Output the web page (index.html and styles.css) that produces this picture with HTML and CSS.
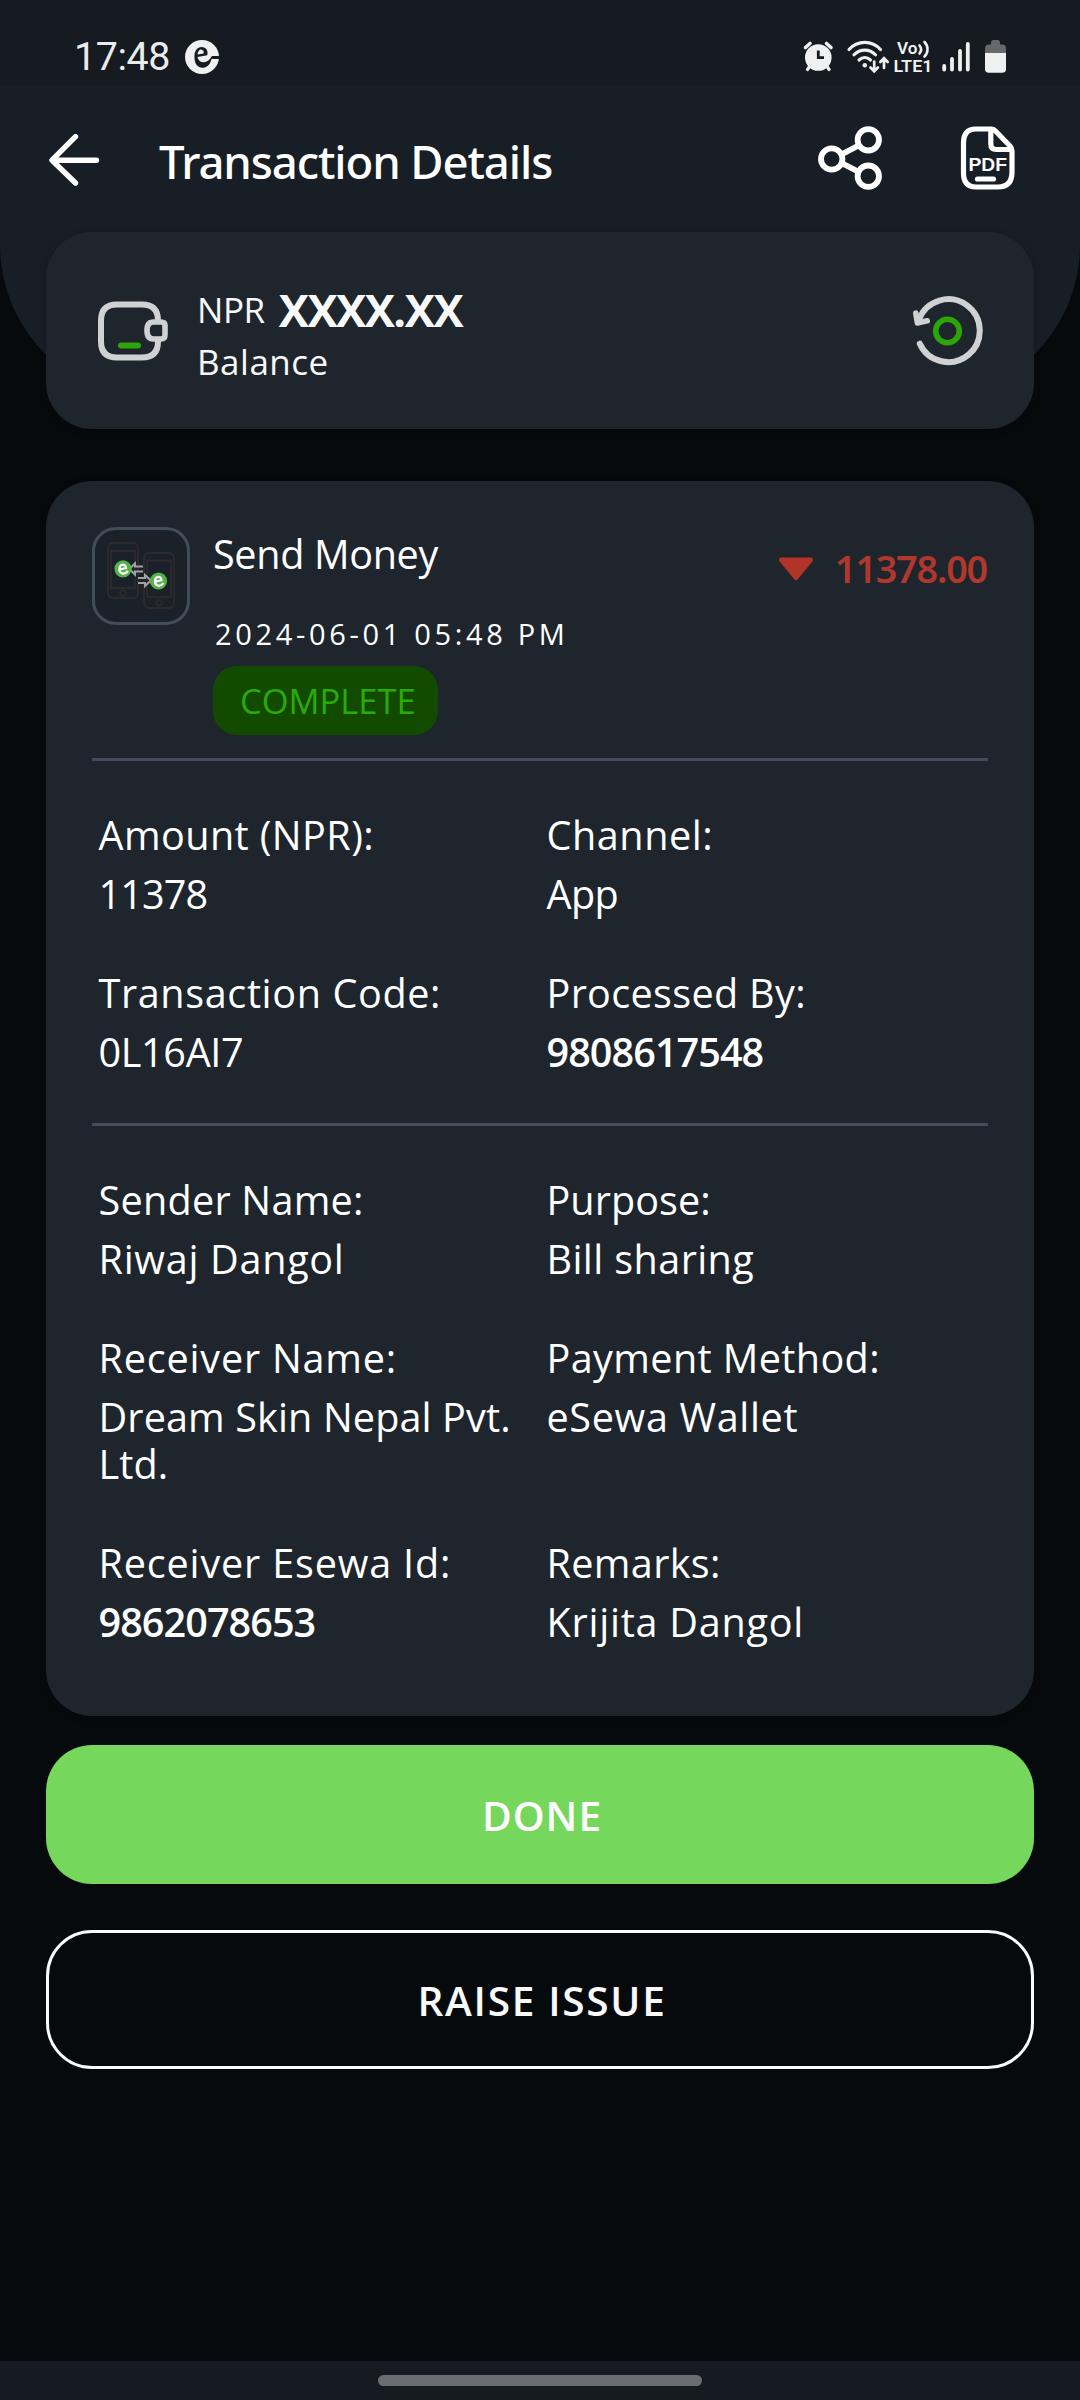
FILE: index.html
```html
<!DOCTYPE html>
<html lang="en">
<head>
<meta charset="utf-8">
<title>Transaction Details</title>
<link rel="stylesheet" href="styles.css">
</head>
<body>
<div class="screen">
  <div class="status-bar">
    <span class="clock">17:48</span>
    <svg class="app-badge" width="34" height="34" viewBox="0 0 34 34">
      <circle cx="17" cy="17" r="17" fill="#eff1f0"/>
      <path d="M9.500 17.500C9 11 12.500 7 16.500 7c4 0 6.500 3 6 6.800l-.3 1.400L12.500 17c.7 3.600 3 5.200 6 5.200 2.500 0 5-1.200 6.500-3.500l2-2.700h7v3h-7.500C25 25 21.500 27.800 17.500 27.800c-5 0-8-4.300-8-10.300z" fill="#161a21"/>
      <path d="M12.400 14.400c.4-3 2-5.100 3.800-5 2 .2 2.800 2 2.400 4z" fill="#eff1f0"/>
    </svg>
    <svg class="status-icons" width="206" height="38" viewBox="802 38 206 38" fill="none" stroke="#eff1f0" stroke-linecap="round">
      <circle cx="818.300" cy="57.500" r="13.300" fill="#eff1f0" stroke="none"/>
      <path d="M805.500 47.500l4.500-4M831 47.500l-4.500-4" stroke-width="3.600"/>
      <path d="M810 66l-2.500 3.500M826.600 66l2.500 3.500" stroke-width="3.200"/>
      <path d="M818.300 50.500v7.200h5.700" stroke="#161a21" stroke-width="2.800" stroke-linecap="butt"/>
      <path d="M849 49.500c8.500-9.500 23-9.500 31.500 0" stroke-width="3.100"/>
      <path d="M854 54.800c6-6.300 15.500-6.300 21.500 0" stroke-width="3.100"/>
      <path d="M859 60c3.500-3.300 8-3.300 11.500 0" stroke-width="3.100"/>
      <circle cx="864.800" cy="65.200" r="2.300" fill="#eff1f0" stroke="none"/>
      <path d="M874.200 61.500v9M870.500 67.500l3.700 3.800 3.700-3.800M884 68v-9M880.300 62l3.700-3.800 3.700 3.800" stroke-width="2.700"/>
      <g class="net-label" fill="#eff1f0" stroke="none">
        <text x="897" y="54" textLength="20.500" lengthAdjust="spacingAndGlyphs">Vo</text>
        <text x="893.500" y="72" textLength="39" lengthAdjust="spacingAndGlyphs">LTE1</text>
      </g>
      <path d="M919.500 45.500c2 2.500 2 5.500 0 8M924.500 42c4 4 4 10.500 0 14.500" stroke-width="2.600"/>
      <path d="M944.200 66v3.600M952 59v10.600M960 51v18.600M967.800 44v25.600" stroke-width="3.800"/>
      <path d="M985 53v-4.500a4 4 0 0 1 4-4h2v-2a2.500 2.500 0 0 1 2.500-2.500h4a2.500 2.500 0 0 1 2.500 2.500v2h2a4 4 0 0 1 4 4V53z" fill="#65696c" stroke="none"/>
      <path d="M985 53h21v16a3.800 3.800 0 0 1-3.800 3.800h-13.400A3.800 3.800 0 0 1 985 69z" fill="#eff1f0" stroke="none"/>
    </svg>
  </div>

  <header class="app-header">
    <div class="toolbar">
      <svg class="back" width="52" height="52" viewBox="48 134 52 52" fill="none" stroke="#fff" stroke-width="5.400" stroke-linecap="round" stroke-linejoin="round"><path d="M75.500 136.700L52 160.200l23.500 22.800M53 160.200h43.500"/></svg>
      <h1 class="page-title">Transaction Details</h1>
      <svg class="share" width="66" height="66" viewBox="817 125 66 66" fill="none" stroke="#fff" stroke-width="5.800"><circle cx="831.700" cy="159" r="10.700"/><circle cx="868.300" cy="139.800" r="10.700"/><circle cx="868.300" cy="176.200" r="10.700"/><path d="M841.500 154.500l17.500-9.300M841.500 163l17.500 9"/></svg>
      <svg class="pdf" width="56" height="66" viewBox="960 125 56 66" fill="none" stroke="#fff" stroke-width="5.200" stroke-linejoin="round">
        <path d="M976 129h15.500q2 0 3.500 1.500l15 15.500q2 2 2 5v21q0 15-14 15h-22q-12.500 0-12.500-14v-30q0-14 12.500-14zM990.800 130v14q0 5.500 5.500 5.500H1011"/>
        <path d="M977.500 179h16" stroke-linecap="round"/>
        <text class="pdf-label" x="968.500" y="171" textLength="38.500" lengthAdjust="spacingAndGlyphs">PDF</text>
      </svg>
    </div>
  </header>

  <main class="content">
    <section class="card balance-card">
      <svg width="72" height="62" viewBox="97 299.500 72 62" fill="none" stroke="#cfd1d3" stroke-width="6"><path d="M158 323v-3q0-16-16-16h-25q-16 0-16 16v21q0 16 16 16h25q16 0 16-16v-3"/><path d="M153.500 321.500H161q4 0 4 3.500v9.500q0 4-4 4h-7.500q-6.500 0-6.500-8.500t6.500-8.500z" stroke-width="5.600" stroke-linejoin="round"/><path d="M121 345h17" stroke="#2aa60a" stroke-linecap="round"/></svg>
      <div class="balance-text">
        <div class="balance-line"><span class="currency">NPR</span><span class="balance-value">XXXX.XX</span></div>
        <div class="balance-label">Balance</div>
      </div>
      <svg class="refresh" width="72" height="72" viewBox="912 294.500 72 72" fill="none" stroke="#cfd1d3" stroke-width="6" stroke-linecap="round" stroke-linejoin="round"><path d="M919.800 343.200A31.400 31.400 0 1 0 919 319"/><path d="M915.800 312.700l1.600 9.800 9.800-2.200" stroke-width="5.600"/><circle cx="947.500" cy="330.500" r="11.800" stroke="#2aa60a" stroke-width="5.600"/></svg>
    </section>

    <section class="card details-card">
      <div class="summary">
        <div class="txn-icon">
          <svg width="92" height="92" viewBox="95 530 92 92" fill="none">
            <g stroke="#2d2a2d" stroke-width="1.800"><rect x="108" y="543" width="30" height="55" rx="5"/><path d="M111 551h24v37h-24z"/><circle cx="123" cy="593" r="2.800"/><rect x="144" y="553" width="30" height="55" rx="5"/><path d="M147 560.500h24V597h-24z"/><circle cx="159" cy="603" r="2.800"/></g>
            <path d="M143 566.500h-8v-3l-5.500 5.500 5.500 5.500v-3h8M138 578h7v-3l6 5.500-6 5.500v-3h-7" stroke="#a2a2a3" stroke-width="2"/>
            <g fill="#55b149"><circle cx="123" cy="568.800" r="8.600"/><circle cx="158.500" cy="581" r="8.600"/></g>
            <g stroke="#fff" stroke-width="2.200"><path d="M119.500 569.500l6.500-1.500c0-4.500-6-4.500-6.600.6-.5 5 5.300 6.800 8.600 2.400M155 581.700l6.500-1.500c0-4.500-6-4.500-6.600.6-.5 5 5.300 6.800 8.600 2.400"/></g>
          </svg>
        </div>
        <div class="summary-text">
          <div class="txn-title">Send Money</div>
          <div class="txn-date">2024-06-01 05:48 PM</div>
          <div class="status-pill">COMPLETE</div>
        </div>
        <div class="txn-amount">
          <svg width="36" height="24" viewBox="0 0 36 24"><path d="M3.500 3h29L18 20.500z" fill="#b13428" stroke="#b13428" stroke-width="5" stroke-linejoin="round"/></svg>
          <span>11378.00</span>
        </div>
      </div>

      <dl class="fields">
        <div class="field amount"><dt>Amount (NPR):</dt><dd>11378</dd></div>
        <div class="field channel"><dt>Channel:</dt><dd>App</dd></div>
        <div class="field code"><dt>Transaction Code:</dt><dd>0L16AI7</dd></div>
        <div class="field processed"><dt>Processed By:</dt><dd class="strong">9808617548</dd></div>
      </dl>

      <dl class="fields">
        <div class="field sender"><dt>Sender Name:</dt><dd>Riwaj Dangol</dd></div>
        <div class="field purpose"><dt>Purpose:</dt><dd>Bill sharing</dd></div>
        <div class="field receiver"><dt>Receiver Name:</dt><dd>Dream Skin Nepal Pvt. Ltd.</dd></div>
        <div class="field method"><dt>Payment Method:</dt><dd>eSewa Wallet</dd></div>
        <div class="field receiver-id"><dt>Receiver Esewa Id:</dt><dd class="strong">9862078653</dd></div>
        <div class="field remarks"><dt>Remarks:</dt><dd>Krijita Dangol</dd></div>
      </dl>
    </section>

    <button class="button button-done">DONE</button>
    <button class="button button-issue">RAISE ISSUE</button>
  </main>

  <div class="nav-bar"><div class="nav-handle"></div></div>
</div>
</body>
</html>
```
FILE: styles.css
```css
* { box-sizing: border-box; }
body {
  margin: 0;
  background: #060a0c;
  color: #fff;
  font-family: "Open Sans", "Noto Sans", sans-serif;
}
svg { display: block; flex: none; }
.screen {
  display: flex;
  flex-direction: column;
  width: 1080px;
  height: 2400px;
  overflow: hidden;
  background: #060a0c;
}

.status-bar {
  display: flex;
  align-items: flex-start;
  flex: none;
  height: 85px;
  padding: 28px 72px 0 74px;
  background: #161a21;
}
.clock {
  width: 111px;
  font: 400 39.4px/58px Roboto, sans-serif;
  letter-spacing: -0.4px;
  color: #eaecec;
}
.app-badge { margin-top: 12px; }
.status-icons { margin: 10px 0 0 auto; }
.net-label { font: 600 17px Roboto, sans-serif; }

.app-header {
  flex: none;
  height: 314px;
  border-radius: 0 0 154px 154px;
  background: #171e25;
}
.toolbar {
  display: flex;
  align-items: center;
  height: 150px;
  padding: 0 64px 0 48px;
}
.page-title {
  margin: 0 auto 0 59px;
  padding-top: 1px;
  font-family: "Noto Sans", sans-serif;
  font-size: 45.5px;
  font-weight: 500;
  line-height: 60px;
  letter-spacing: -1.1px;
}
.share, .pdf { margin-bottom: 4px; }
.share { margin-right: 77px; }
.pdf-label {
  fill: #fff;
  stroke: none;
  font: 700 18px "Liberation Sans", sans-serif;
}

.content {
  display: flex;
  flex-direction: column;
  margin-top: -167px;
  padding: 0 46px;
}
.card {
  border-radius: 46px;
  background: #1e252d;
  box-shadow: 0 2px 8px rgba(0, 0, 0, .18);
}
.balance-card {
  display: flex;
  align-items: center;
  height: 197px;
  padding: 0 50px 0 51px;
}
.balance-text {
  display: flex;
  flex-direction: column;
  margin-left: 28px;
  padding-top: 10px;
  line-height: 52px;
  color: #f8f8f8;
}
.balance-line { display: flex; align-items: center; gap: 14px; }
.currency, .balance-label { font-size: 35px; }
.currency { letter-spacing: -.4px; }
.balance-label { letter-spacing: .5px; }
.balance-value { font-size: 45.2px; font-weight: 700; letter-spacing: -1.5px; }
.refresh { margin-left: auto; }

.details-card {
  height: 1235px;
  margin-top: 52px;
  padding: 46px;
}
.summary { display: flex; height: 231px; }
.txn-icon {
  width: 98px;
  height: 98px;
  border: 3px solid #414d5a;
  border-radius: 24px;
  background: #1b2128;
}
.summary-text {
  display: flex;
  flex-direction: column;
  align-items: flex-start;
  margin-left: 23px;
}
.txn-title { padding-top: 1px; font-size: 39.6px; line-height: 53px; letter-spacing: -.35px; }
.txn-date {
  margin-top: 33px;
  padding-left: 2px;
  font-size: 29px;
  line-height: 40px;
  letter-spacing: 3.67px;
}
.status-pill {
  width: 225px;
  height: 69px;
  margin-top: 12px;
  padding-left: 27px;
  border-radius: 24px;
  background: #124a00;
  color: #2aaa08;
  font-size: 34.5px;
  line-height: 69px;
  letter-spacing: 0;
}
.txn-amount {
  display: flex;
  align-items: center;
  gap: 21px;
  height: 83px;
  margin: 0 1px 0 auto;
  color: #af372b;
  font-family: "Noto Sans", sans-serif;
  font-size: 37.8px;
  font-weight: 600;
  letter-spacing: -1.2px;
}

.fields {
  display: grid;
  grid-template-columns: 448px 448px;
  row-gap: 52px;
  margin: 0;
  padding: 51px 0 47px;
  border-top: 3px solid #414d5a;
}
.field {
  padding-left: 6.5px;
  font-size: 39.6px;
  line-height: 47px;
}
.field dd { margin: 12px 0 0; }
.field .strong { font-weight: 600; letter-spacing: -.95px; }
.amount dt { letter-spacing: .41px; }
.amount dd { letter-spacing: -.9px; }
.channel dt { letter-spacing: .55px; }
.channel dd { letter-spacing: -.65px; }
.code dt { letter-spacing: .62px; }
.code dd { letter-spacing: -.35px; }
.processed dt { letter-spacing: .32px; }
.sender dt { letter-spacing: .25px; }
.sender dd { letter-spacing: .7px; }
.purpose dt { letter-spacing: .05px; }
.purpose dd { letter-spacing: .4px; }
.receiver dt { letter-spacing: .8px; }
.receiver dd { letter-spacing: .12px; }
.method dt { letter-spacing: .38px; }
.method dd { letter-spacing: .65px; }
.receiver-id dt { letter-spacing: .82px; }
.remarks dt { letter-spacing: .35px; }
.remarks dd { letter-spacing: .75px; }

.button {
  height: 139px;
  padding: 2px 0 0 4px;
  border: 0;
  border-radius: 46px;
  font: 600 40.6px "Open Sans", sans-serif;
  color: #fff;
}
.button-done { margin-top: 29px; background: #75d75b; letter-spacing: 1px; }
.button-issue {
  margin-top: 46px;
  border: 3px solid #fafafa;
  background: transparent;
  color: #fafafa;
  letter-spacing: 1.7px;
}

.nav-bar {
  display: flex;
  justify-content: center;
  flex: none;
  height: 39px;
  margin-top: auto;
  padding-top: 14px;
  background: #161a21;
}
.nav-handle {
  width: 324px;
  height: 11px;
  border-radius: 6px;
  background: #6a6e70;
}
```
